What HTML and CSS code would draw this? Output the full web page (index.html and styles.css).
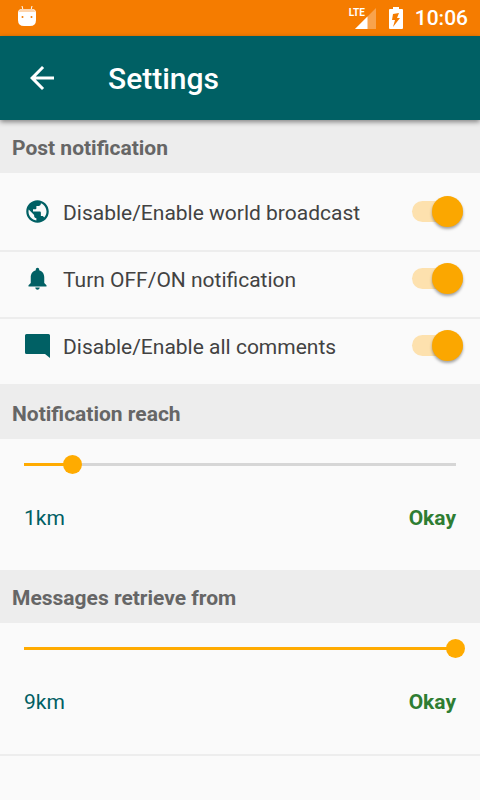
FILE: index.html
```html
<!DOCTYPE html>
<html lang="en">
  <head>
    <meta charset="UTF-8" />
    <meta name="viewport" content="width=device-width, initial-scale=1.0" />
    <title>Settings</title>
    <link rel="stylesheet" href="styles.css">
  </head>
  <body>
    <div class="status-bar">
      <svg class="status-app" width="20" height="24" viewBox="0 0 20 24">
        <path d="M5 2l1 4M15 2l-1 4" stroke="#fff" stroke-width="1" fill="none" />
        <path d="M1 9q0-4 4-4h10q4 0 4 4v7q0 6-6 6H7q-6 0-6-6z" fill="#fff" />
        <path d="M2 8q0-3 3-3h10q3 0 3 3z" fill="#fdd5ae" />
        <circle cx="5.500" cy="13" r="1" fill="#f57c00" />
        <circle cx="14.500" cy="13" r="1" fill="#f57c00" />
      </svg>
      <div class="status-right">
        <div class="signal">
          <span class="lte">LTE</span>
          <svg width="21" height="21" viewBox="0 0 21 21">
            <path d="M21 0v21H0z" fill="#fff" opacity=".3" />
            <path d="M12.500 8.500V21H0z" fill="#fff" />
          </svg>
        </div>
        <svg class="battery" width="14" height="22" viewBox="0 0 14 22">
          <path d="M4 0h6v2h3q1 0 1 1v18q0 1-1 1H1q-1 0-1-1V3q0-1 1-1h3z" fill="#fff" />
          <path d="M10 6L4 7 3 13h3l-2 7 7-9H8z" fill="#f57c00" />
        </svg>
        <span class="clock">10:06</span>
      </div>
    </div>

    <header class="toolbar">
      <button class="back" aria-label="Back">
        <svg width="36" height="36" viewBox="0 0 24 24" fill="#fff">
          <path d="M20 11H7.830l5.590-5.590L12 4l-8 8 8 8 1.410-1.410L7.830 13H20z" />
        </svg>
      </button>
      <h1>Settings</h1>
    </header>

    <main>
      <h2>Post notification</h2>
      <div class="switches">
        <div class="row">
          <svg class="icon" width="27" height="27" viewBox="0 0 24 24">
            <path d="M12 2C6.480 2 2 6.480 2 12s4.480 10 10 10 10-4.480 10-10S17.520 2 12 2zm-1 17.930c-3.950-.49-7-3.850-7-7.930 0-.62.08-1.210.21-1.790L9 15v1c0 1.100.9 2 2 2v1.930zm6.900-2.540c-.26-.81-1-1.390-1.900-1.390h-1v-3c0-.55-.45-1-1-1H8v-2h2c.55 0 1-.45 1-1V7h2c1.100 0 2-.9 2-2v-.41c2.930 1.190 5 4.060 5 7.410 0 2.080-.8 3.970-2.100 5.390z" />
          </svg>
          <label for="broadcast">Disable/Enable world broadcast</label>
          <input class="switch" type="checkbox" id="broadcast" checked />
        </div>
        <div class="row">
          <svg class="icon" width="27" height="27" viewBox="0 0 24 24">
            <path d="M12 22c1.100 0 2-.9 2-2h-4c0 1.100.89 2 2 2zm6-6v-5c0-3.070-1.640-5.640-4.500-6.320V4c0-.83-.67-1.500-1.500-1.500s-1.500.67-1.500 1.500v.68C7.630 5.360 6 7.920 6 11v5l-2 2v1h16v-1l-2-2z" />
          </svg>
          <label for="notification">Turn OFF/ON notification</label>
          <input class="switch" type="checkbox" id="notification" checked />
        </div>
        <div class="row">
          <svg class="icon" width="27" height="27" viewBox="0 0 27 27">
            <path d="M2.500 2h22q1.500 0 1.500 1.500V26l-5-4H2.500Q1 22 1 20.500v-17Q1 2 2.500 2z" />
          </svg>
          <label for="comments">Disable/Enable all comments</label>
          <input class="switch" type="checkbox" id="comments" checked />
        </div>
      </div>

      <h2 id="reach-title">Notification reach</h2>
      <div class="distance">
        <input class="slider" type="range" id="reach" min="0" max="9" value="1" style="--fill: 11.1%" aria-labelledby="reach-title" />
        <div class="distance-foot">
          <output for="reach">1km</output>
          <button class="okay">Okay</button>
        </div>
      </div>

      <h2 id="retrieve-title">Messages retrieve from</h2>
      <div class="distance last">
        <input class="slider" type="range" id="retrieve" min="0" max="9" value="9" style="--fill: 100%" aria-labelledby="retrieve-title" />
        <div class="distance-foot">
          <output for="retrieve">9km</output>
          <button class="okay">Okay</button>
        </div>
      </div>
    </main>

    <script>
      // update the km value and the coloured part of the track
      document.querySelectorAll(".slider").forEach(function (slider) {
        slider.addEventListener("input", function () {
          slider.style.setProperty("--fill", (slider.value / slider.max) * 100 + "%");
          slider.parentNode.querySelector("output").value = slider.value + "km";
        });
      });
    </script>
  </body>
</html>
```
FILE: styles.css
```css
* {
  box-sizing: border-box;
}
body {
  margin: 0;
  background: #fafafa;
  color: #424242;
  font-family: Roboto, "Liberation Sans", sans-serif;
  font-size: 21px;
  line-height: 25px;
}
button {
  padding: 0;
  border: 0;
  background: none;
  font: inherit;
  cursor: pointer;
}
svg {
  display: block;
}

/* status bar */
.status-bar {
  display: flex;
  justify-content: space-between;
  align-items: center;
  height: 36px;
  padding: 0 12px 0 17px;
  background: #f57c00;
  color: #fff;
}
.status-app {
  margin-bottom: 4px;
}
.status-right {
  display: flex;
  align-items: center;
}
.signal {
  position: relative;
  margin-right: 13px;
}
.lte {
  position: absolute;
  top: -1px;
  left: -6px;
  font-family: "Liberation Sans Narrow", Roboto, sans-serif;
  font-size: 10px;
  font-weight: 700;
  line-height: 12px;
}
.battery {
  margin-right: 12px;
}
.clock {
  padding-top: 1px;
  font-weight: 500;
}

/* toolbar */
.toolbar {
  position: relative;
  display: flex;
  align-items: center;
  gap: 48px;
  height: 84px;
  padding: 0 24px;
  background: #006064;
  color: #fff;
  box-shadow: 0 2px 5px rgba(0, 0, 0, 0.45);
}
h1 {
  margin: 0;
  padding-top: 2px;
  font-size: 30px;
  font-weight: 500;
  line-height: 36px;
}

h2 {
  margin: 0;
  padding: 16px 12px 12px;
  background: #ededed;
  color: #666;
  font-size: 21px;
  font-weight: 700;
}

/* switches */
.switches {
  padding-top: 12px;
}
.row {
  display: flex;
  align-items: center;
  padding: 11px 17px 23px 24px;
  border-bottom: 2px solid #ededed;
}
.icon {
  fill: #006064;
}
.row label {
  flex: 1;
  padding: 3px 0 0 12px;
}
.switch {
  appearance: none;
  display: flex;
  align-items: center;
  justify-content: flex-start;
  width: 51px;
  height: 21px;
  margin: 5px 0;
  background: #fde1ae;
  border-radius: 11px;
}
.switch::before {
  content: "";
  width: 31px;
  height: 31px;
  border-radius: 50%;
  background: #fafafa;
  box-shadow: 0 2px 3px rgba(0, 0, 0, 0.35);
}
.switch:checked {
  justify-content: flex-end;
}
.switch:checked::before {
  background: #fba700;
}

/* sliders */
.distance {
  padding: 16px 24px 39px;
}
.distance.last {
  border-bottom: 2px solid #ededed;
}
.slider {
  appearance: none;
  display: block;
  width: calc(100% + 18px);
  height: 19px;
  margin: 0 -9px 32px;
  background: linear-gradient(to right, #ffab00 var(--fill), #d6d6d6 var(--fill)) no-repeat center / calc(100% - 18px) 3px;
}
.slider::-webkit-slider-thumb {
  appearance: none;
  width: 19px;
  height: 19px;
  border-radius: 50%;
  background: #ffab00;
}
.distance-foot {
  display: flex;
  justify-content: space-between;
  color: #006064;
}
.okay {
  color: #2e7d32;
  font-weight: 700;
}
```
